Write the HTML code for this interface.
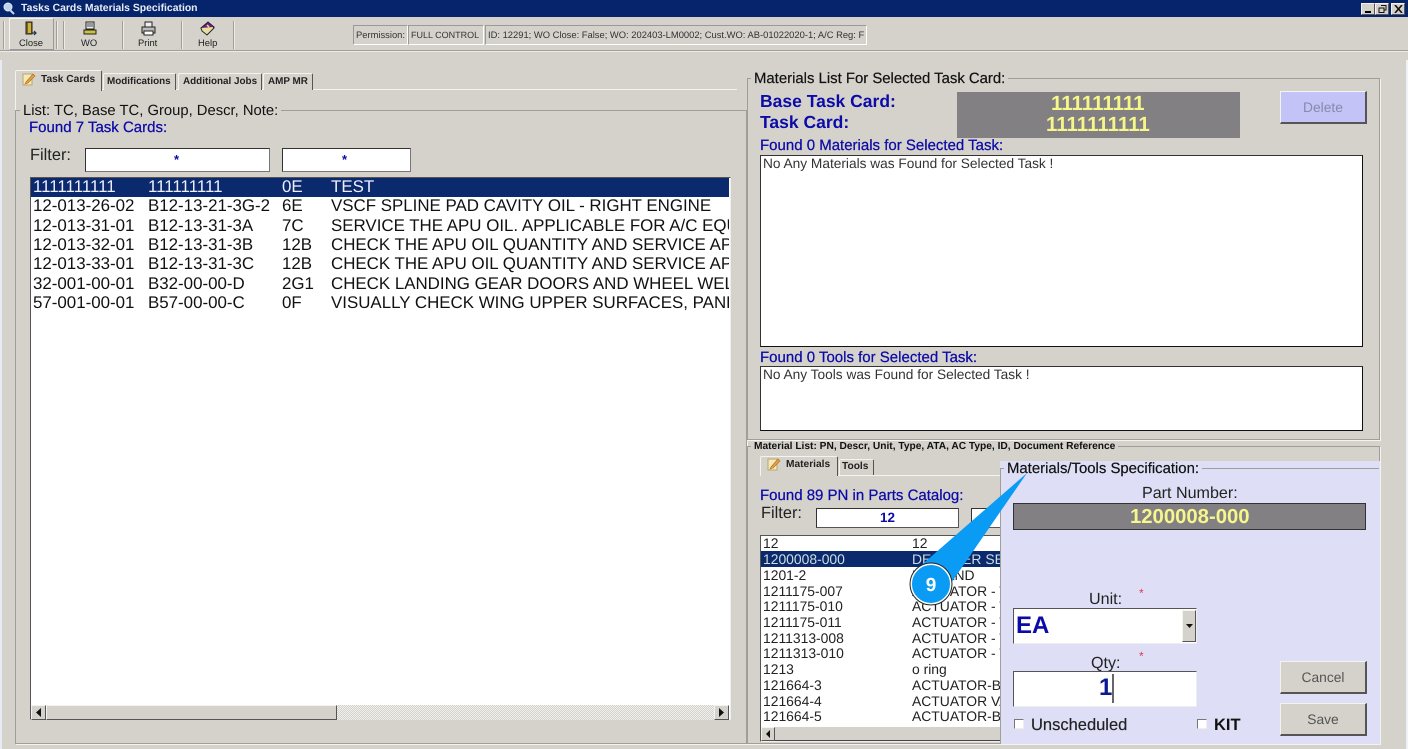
<!DOCTYPE html>
<html><head><meta charset="utf-8">
<style>
html,body{margin:0;padding:0}
body{width:1408px;height:749px;overflow:hidden;position:relative;background:#d5d2cc;font-family:"Liberation Sans",sans-serif;color:#111;text-rendering:geometricPrecision}
div,span.a{position:absolute;box-sizing:border-box}
.t{position:absolute;white-space:nowrap;line-height:1}
.b{font-weight:bold}
.blue{color:#0b0ba8}
.sunk{background:#fff;border:1px solid;border-color:#555 #eee #eee #555}
.raised{background:#d5d2cc;border:1px solid;border-color:#f4f3ef #555 #555 #f4f3ef}
.gl{border:1px solid #a09e98;box-shadow:1px 1px 0 #f4f3ef}
.lbl{background:#d5d2cc;padding:0 3px}
.sep{width:2px;background:#eeece8;border-left:1px solid #a09e98;top:21px;height:28px}
.tb{font-size:9.4px;color:#222;text-align:center}
.tab{background:#d5d2cc;border:1px solid;border-color:#f4f3ef #555 transparent #f4f3ef;border-radius:2px 2px 0 0}
.st{background:#d5d2cc;border:1px solid;border-color:#999 #fff #fff #999;font-size:9.4px;color:#333;white-space:nowrap;overflow:hidden;line-height:18px;padding-left:2px}
.r1{font-size:16.9px;color:#111}
.d{width:398px;overflow:hidden}
.r2{font-size:13.9px;color:#222}
.btn{background:#d5d2cc;border:1px solid;border-color:#f4f3ef #555 #555 #f4f3ef;border-bottom-width:2px;border-right-width:2px;text-align:center;color:#555;font-size:13.8px}
.cb{width:10px;height:10px;background:#fff;border:1px solid;border-color:#777 #eee #eee #777}
.h{font-size:15px;-webkit-text-stroke:.25px #0b0ba8}
.w{width:88px;overflow:hidden}
</style></head><body>
<div style="left:0;top:60px;width:2px;height:689px;background:#e6ebf4"></div>
<div style="left:1406px;top:60px;width:2px;height:689px;background:#eef1f7"></div>

<!-- title bar -->
<div style="left:0;top:0;width:1408px;height:17px;background:#06246b"></div>
<svg style="position:absolute;left:2px;top:2px" width="14" height="13" viewBox="0 0 14 13"><circle cx="6" cy="5" r="4" fill="#bcd4ee" stroke="#dfe8f5"/><path d="M8 8l4 4" stroke="#c8d4e8" stroke-width="2"/></svg>
<span class="t b" style="left:21px;top:4px;font-size:10.4px;color:#e8ecf4">Tasks Cards Materials Specification</span>
<div class="raised" style="left:1361px;top:3px;width:14px;height:12px"><div style="left:3px;top:7px;width:6px;height:2px;background:#000"></div></div>
<div class="raised" style="left:1375px;top:3px;width:14px;height:12px"><svg style="position:absolute;left:2px;top:1px" width="9" height="8"><path d="M3 .5h5v4.500H6.500M1 3h5v4.500H1z" fill="none" stroke="#111"/></svg></div>
<div class="raised" style="left:1391px;top:3px;width:14px;height:12px"><svg style="position:absolute;left:2px;top:1px" width="9" height="8"><path d="M1 0l7 8M8 0l-7 8" stroke="#111" stroke-width="1.6"/></svg></div>

<!-- toolbar -->
<div style="left:0;top:50px;width:1408px;height:1px;background:#a09e98"></div>
<div style="left:0;top:51px;width:1408px;height:1px;background:#eeece8"></div>
<div class="sep" style="left:3px"></div>
<div class="raised" style="left:9px;top:18px;width:45px;height:32px;border-color:#f4f3ef #999 #999 #f4f3ef"></div>
<div class="sep" style="left:56px"></div><div class="sep" style="left:63px"></div>
<div class="sep" style="left:122px"></div><div class="sep" style="left:181px"></div><div class="sep" style="left:233px"></div>
<svg style="position:absolute;left:23px;top:21px" width="16" height="16" viewBox="0 0 16 16"><path d="M3 1h6v12H3z" fill="#7a6a20" stroke="#222"/><path d="M5 2h3v10H5z" fill="#c9b13a"/><path d="M9 12h4M11 10l2 2-2 2" stroke="#234" fill="none" stroke-width="1.2"/></svg>
<svg style="position:absolute;left:82px;top:21px" width="16" height="16" viewBox="0 0 16 16"><path d="M4 1h8v7H4z" fill="#eee" stroke="#222"/><path d="M5 3h6M5 5h6" stroke="#444"/><path d="M2 9h12v4H2z" fill="#c9c23a" stroke="#222"/></svg>
<svg style="position:absolute;left:140px;top:21px" width="17" height="16" viewBox="0 0 17 16"><path d="M5 1h7v5H5z" fill="#eee" stroke="#222"/><path d="M2 6h13v6H2z" fill="#bbb" stroke="#222"/><path d="M4 10h9v4H4z" fill="#fff" stroke="#222"/></svg>
<svg style="position:absolute;left:199px;top:21px" width="17" height="16" viewBox="0 0 17 16"><path d="M2 7l7-6 6 5-7 7z" fill="#6a18a8" stroke="#222"/><path d="M2 7l1 3 5 4 7-7-1-1" fill="#e8e0a0" stroke="#222"/><path d="M8 4l2 2" stroke="#ff0" stroke-width="1.500"/></svg>
<span class="t tb" style="left:19px;top:38px">Close</span>
<span class="t tb" style="left:81px;top:38px">WO</span>
<span class="t tb" style="left:138px;top:38px">Print</span>
<span class="t tb" style="left:198px;top:38px">Help</span>
<div class="st" style="left:353px;top:25px;width:55px;height:20px;">Permission:</div>
<div class="st" style="left:408px;top:25px;width:76px;height:20px;font-size:9px">FULL CONTROL</div>
<div class="st" style="left:485px;top:25px;width:382px;height:20px;">ID: 12291; WO Close: False; WO: 202403-LM0002; Cust.WO: AB-01022020-1; A/C Reg: F</div>

<!-- left tabs -->
<div style="left:15px;top:89px;width:722px;height:1px;background:#f4f3ef"></div>
<div style="left:15px;top:89px;width:1px;height:21px;background:#f4f3ef"></div>
<div class="tab" style="left:15px;top:70px;width:87px;height:21px;border-bottom:0;z-index:2"></div>
<svg style="position:absolute;left:22px;top:72px;z-index:3" width="14" height="14" viewBox="0 0 14 14"><path d="M1 2h9v11H1z" fill="#f4e9b8" stroke="#b9a868"/><path d="M4 10l7-8 2 2-7 7-3 1z" fill="#e8a040" stroke="#a87020" stroke-width=".6"/></svg>
<span class="t b" style="left:41px;top:74.5px;font-size:10.2px;color:#222;z-index:3">Task Cards</span>
<div class="tab" style="left:103px;top:73px;width:73px;height:17px;border-bottom:0"></div>
<span class="t b" style="left:107px;top:76.5px;font-size:9.9px;color:#222">Modifications</span>
<div class="tab" style="left:178px;top:73px;width:84px;height:17px;border-bottom:0"></div>
<span class="t b" style="left:183px;top:76.5px;font-size:9.9px;color:#222">Additional Jobs</span>
<div class="tab" style="left:263px;top:73px;width:50px;height:17px;border-bottom:0"></div>
<span class="t b" style="left:268px;top:76.5px;font-size:9.9px;color:#222">AMP MR</span>

<!-- left group -->
<div class="gl" style="left:15px;top:110px;width:732px;height:634px"></div>
<span class="t lbl" style="left:20px;top:104px;font-size:14.8px;color:#111">List: TC, Base TC, Group, Descr, Note:</span>
<span class="t blue h" style="left:29px;top:119.5px">Found 7 Task Cards:</span>
<span class="t" style="left:30px;top:147px;font-size:16.4px;color:#222">Filter:</span>
<div class="sunk" style="left:85px;top:148px;width:185px;height:24px;border-color:#333 #777 #777 #333"></div>
<span class="t b blue" style="left:174px;top:153px;font-size:13px">*</span>
<div class="sunk" style="left:282px;top:148px;width:129px;height:24px;border-color:#333 #777 #777 #333"></div>
<span class="t b blue" style="left:342px;top:153px;font-size:13px">*</span>

<div class="sunk" style="left:30px;top:177px;width:701px;height:543px;overflow:hidden">
<div style="left:0;top:0;width:698px;height:19px;background:#0b2a6e"></div>
</div>
<div style="left:31px;top:705px;width:698px;height:15px;background:repeating-conic-gradient(#d5d2cc 0 25%,#f2f0ec 0 50%) 0 0/2px 2px"></div>
<div class="raised" style="left:31px;top:705px;width:15px;height:15px;border-width:1px"><svg style="position:absolute;left:4px;top:2px" width="6" height="9"><path d="M5 0L0 4.500 5 9z" fill="#111"/></svg></div>
<div class="raised" style="left:46px;top:705px;width:291px;height:15px;"></div>
<div class="raised" style="left:714px;top:705px;width:15px;height:15px"><svg style="position:absolute;left:4px;top:2px" width="6" height="9"><path d="M0 0l5 4.500L0 9z" fill="#111"/></svg></div>

<span class="t r1" style="left:33px;top:179px;color:#eef">1111111111</span><span class="t r1" style="left:148px;top:179px;color:#eef">111111111</span><span class="t r1" style="left:282px;top:179px;color:#eef">0E</span><span class="t r1" style="left:331px;top:179px;color:#eef">TEST</span>
<span class="t r1" style="left:33px;top:198px">12-013-26-02</span><span class="t r1" style="left:148px;top:198px">B12-13-21-3G-2</span><span class="t r1" style="left:282px;top:198px">6E</span><span class="t r1" style="left:331px;top:198px">VSCF SPLINE PAD CAVITY OIL - RIGHT ENGINE</span>
<span class="t r1" style="left:33px;top:218px">12-013-31-01</span><span class="t r1" style="left:148px;top:218px">B12-13-31-3A</span><span class="t r1" style="left:282px;top:218px">7C</span><span class="t r1 d" style="left:331px;top:218px">SERVICE THE APU OIL. APPLICABLE FOR A/C EQUIPPED</span>
<span class="t r1" style="left:33px;top:237px">12-013-32-01</span><span class="t r1" style="left:148px;top:237px">B12-13-31-3B</span><span class="t r1" style="left:282px;top:237px">12B</span><span class="t r1 d" style="left:331px;top:237px">CHECK THE APU OIL QUANTITY AND SERVICE APU OIL</span>
<span class="t r1" style="left:33px;top:256px">12-013-33-01</span><span class="t r1" style="left:148px;top:256px">B12-13-31-3C</span><span class="t r1" style="left:282px;top:256px">12B</span><span class="t r1 d" style="left:331px;top:256px">CHECK THE APU OIL QUANTITY AND SERVICE APU OIL</span>
<span class="t r1" style="left:33px;top:276px">32-001-00-01</span><span class="t r1" style="left:148px;top:276px">B32-00-00-D</span><span class="t r1" style="left:282px;top:276px">2G1</span><span class="t r1 d" style="left:331px;top:276px">CHECK LANDING GEAR DOORS AND WHEEL WELL AREA</span>
<span class="t r1" style="left:33px;top:295px">57-001-00-01</span><span class="t r1" style="left:148px;top:295px">B57-00-00-C</span><span class="t r1" style="left:282px;top:295px">0F</span><span class="t r1 d" style="left:331px;top:295px">VISUALLY CHECK WING UPPER SURFACES, PANELS AND</span>

<!-- right top group -->
<div class="gl" style="left:747px;top:78px;width:633px;height:362px"></div>
<span class="t lbl" style="left:751px;top:72px;font-size:14.9px;color:#111;-webkit-text-stroke:.2px #111">Materials List For Selected Task Card:</span>
<span class="t b blue" style="left:760px;top:92.500px;font-size:17.5px">Base Task Card:</span>
<span class="t b blue" style="left:760px;top:113.500px;font-size:17.5px">Task Card:</span>
<div style="left:957px;top:92px;width:283px;height:46px;background:#838084"></div>
<span class="t b" style="left:1051px;top:94px;font-size:20.500px;color:#f6f68a">111111111</span>
<span class="t b" style="left:1046px;top:115px;font-size:20.500px;color:#f6f68a">1111111111</span>
<div class="btn" style="left:1280px;top:91px;width:87px;height:33px;background:#c3c3f8;color:#8a8aa8;line-height:31px">Delete</div>
<span class="t blue h" style="left:760px;top:138px">Found 0 Materials for Selected Task:</span>
<div class="sunk" style="left:760px;top:155px;width:603px;height:192px;border-color:#333 #111 #111 #333"></div>
<span class="t" style="left:763px;top:157px;font-size:13.7px;color:#333">No Any Materials was Found for Selected Task !</span>
<span class="t blue h" style="left:760px;top:349.500px">Found 0 Tools for Selected Task:</span>
<div class="sunk" style="left:760px;top:366px;width:603px;height:65px;border-color:#333 #111 #111 #333"></div>
<span class="t" style="left:763px;top:368px;font-size:13.7px;color:#333">No Any Tools was Found for Selected Task !</span>

<!-- right bottom group -->
<div class="gl" style="left:747px;top:446px;width:633px;height:298px"></div>
<span class="t lbl b" style="left:751px;top:441.500px;font-size:10.2px;color:#111">Material List: PN, Descr, Unit, Type, ATA, AC Type, ID, Document Reference</span>
<div style="left:760px;top:475px;width:240px;height:1px;background:#f4f3ef"></div>
<div class="tab" style="left:760px;top:456px;width:78px;height:20px;border-bottom:0"></div>
<svg style="position:absolute;left:767px;top:457px" width="14" height="14" viewBox="0 0 14 14"><path d="M1 2h9v11H1z" fill="#f4e9b8" stroke="#b9a868"/><path d="M4 10l7-8 2 2-7 7-3 1z" fill="#e8a040" stroke="#a87020" stroke-width=".6"/></svg>
<span class="t b" style="left:786px;top:460px;font-size:10.2px;color:#222">Materials</span>
<div class="tab" style="left:839px;top:459px;width:35px;height:16px;border-bottom:0"></div>
<span class="t b" style="left:842px;top:461.500px;font-size:10.2px;color:#222">Tools</span>
<span class="t blue h" style="left:760px;top:487.500px">Found 89 PN in Parts Catalog:</span>
<span class="t" style="left:761px;top:505px;font-size:16.4px;color:#222">Filter:</span>
<div class="sunk" style="left:816px;top:508px;width:143px;height:20px;border-color:#333 #555 #555 #333"></div>
<span class="t b blue" style="left:880px;top:511px;font-size:13.5px">12</span>
<div class="sunk" style="left:971px;top:508px;width:40px;height:20px;border-color:#333 #555 #555 #333"></div>

<div class="sunk" style="left:760px;top:535px;width:245px;height:207px;overflow:hidden"></div>
<div style="left:761px;top:551px;width:240px;height:16px;background:#0b2a6e"></div>
<div style="left:761px;top:727px;width:240px;height:14px;background:#d5d2cc;border-bottom:1px solid #444"></div>
<div class="raised" style="left:761px;top:727px;width:14px;height:14px"><svg style="position:absolute;left:4px;top:2px" width="5" height="8"><path d="M4 0L0 4 4 8z" fill="#111"/></svg></div>

<span class="t r2" style="left:763px;top:537px">12</span><span class="t r2" style="left:912px;top:537px">12</span>
<span class="t r2" style="left:763px;top:552.500px;color:#cdd">1200008-000</span><span class="t r2 w" style="left:912px;top:552.500px;color:#cdd">DECODER SET</span>
<span class="t r2" style="left:763px;top:568.500px">1201-2</span><span class="t r2" style="left:912px;top:568.500px">BO BAND</span>
<span class="t r2" style="left:763px;top:584.500px">1211175-007</span><span class="t r2 w" style="left:912px;top:584.500px">ACTUATOR - T</span>
<span class="t r2" style="left:763px;top:600px">1211175-010</span><span class="t r2 w" style="left:912px;top:600px">ACTUATOR - T</span>
<span class="t r2" style="left:763px;top:615.500px">1211175-011</span><span class="t r2 w" style="left:912px;top:615.500px">ACTUATOR - T</span>
<span class="t r2" style="left:763px;top:631.500px">1211313-008</span><span class="t r2 w" style="left:912px;top:631.500px">ACTUATOR - T</span>
<span class="t r2" style="left:763px;top:647px">1211313-010</span><span class="t r2 w" style="left:912px;top:647px">ACTUATOR - T</span>
<span class="t r2" style="left:763px;top:663px">1213</span><span class="t r2" style="left:912px;top:663px">o ring</span>
<span class="t r2" style="left:763px;top:679px">121664-3</span><span class="t r2 w" style="left:912px;top:679px">ACTUATOR-BOX</span>
<span class="t r2" style="left:763px;top:694.500px">121664-4</span><span class="t r2 w" style="left:912px;top:694.500px">ACTUATOR VAL</span>
<span class="t r2" style="left:763px;top:710px">121664-5</span><span class="t r2 w" style="left:912px;top:710px">ACTUATOR-BOX</span>

<!-- spec panel -->
<div style="left:1000px;top:461px;width:380px;height:283px;background:#dedff6"></div>
<div style="left:1000px;top:468px;width:379px;height:1px;background:#a09e98"></div>
<div style="left:1000px;top:468px;width:1px;height:276px;background:#a09e98"></div>
<span class="t" style="left:1004px;top:462px;padding:0 3px;background:#dedff6;font-size:14.9px;color:#111;-webkit-text-stroke:.2px #111">Materials/Tools Specification:</span>
<span class="t" style="left:1142px;top:485px;font-size:16.1px;color:#222">Part Number:</span>
<div style="left:1013px;top:503px;width:353px;height:27px;background:#838084;border:1px solid #333"></div>
<span class="t b" style="left:1130px;top:506.500px;font-size:20.3px;color:#f6f68a">1200008-000</span>
<span class="t" style="left:1089px;top:591px;font-size:16.1px;color:#222">Unit:</span>
<span class="t" style="left:1139px;top:587px;font-size:12px;color:#e23a5a">*</span>
<div class="sunk" style="left:1013px;top:608px;width:184px;height:36px;border-color:#555 #eee #eee #555"></div>
<span class="t b blue" style="left:1016px;top:614px;font-size:24px">EA</span>
<div class="raised" style="left:1182px;top:610px;width:14px;height:32px"><svg style="position:absolute;left:3px;top:13px" width="7" height="4"><path d="M0 0h7L3.500 4z" fill="#111"/></svg></div>
<span class="t" style="left:1091px;top:655px;font-size:16.1px;color:#222">Qty:</span>
<span class="t" style="left:1139px;top:650px;font-size:12px;color:#e23a5a">*</span>
<div class="sunk" style="left:1013px;top:671px;width:184px;height:36px"></div>
<span class="t b" style="left:1099px;top:676px;font-size:24px;color:#0b1a90">1</span>
<div style="left:1112px;top:674px;width:2px;height:29px;background:#666"></div>
<div class="btn" style="left:1280px;top:661px;width:87px;height:33px;line-height:31px">Cancel</div>
<div class="btn" style="left:1280px;top:703px;width:87px;height:33px;line-height:31px">Save</div>
<div class="cb" style="left:1014px;top:719px"></div>
<span class="t" style="left:1031px;top:717px;font-size:16.5px;color:#222;-webkit-text-stroke:.2px #222">Unscheduled</span>
<div class="cb" style="left:1197px;top:719px"></div>
<span class="t b" style="left:1214px;top:717px;font-size:16.5px;color:#111">KIT</span>

<!-- callout -->
<svg style="position:absolute;left:900px;top:465px" width="140" height="150" viewBox="0 0 140 150">
<path d="M127 8L18 103 47 124z" fill="#0a9bf5"/>
<circle cx="31" cy="119" r="20" fill="#0a9bf5" stroke="#fff" stroke-width="2"/>
<circle cx="31" cy="119" r="21" fill="none" stroke="#222" stroke-width="1"/>
<text x="31" y="126" text-anchor="middle" font-family="Liberation Sans" font-weight="bold" font-size="19" fill="#fff">9</text>
</svg>
</body></html>
